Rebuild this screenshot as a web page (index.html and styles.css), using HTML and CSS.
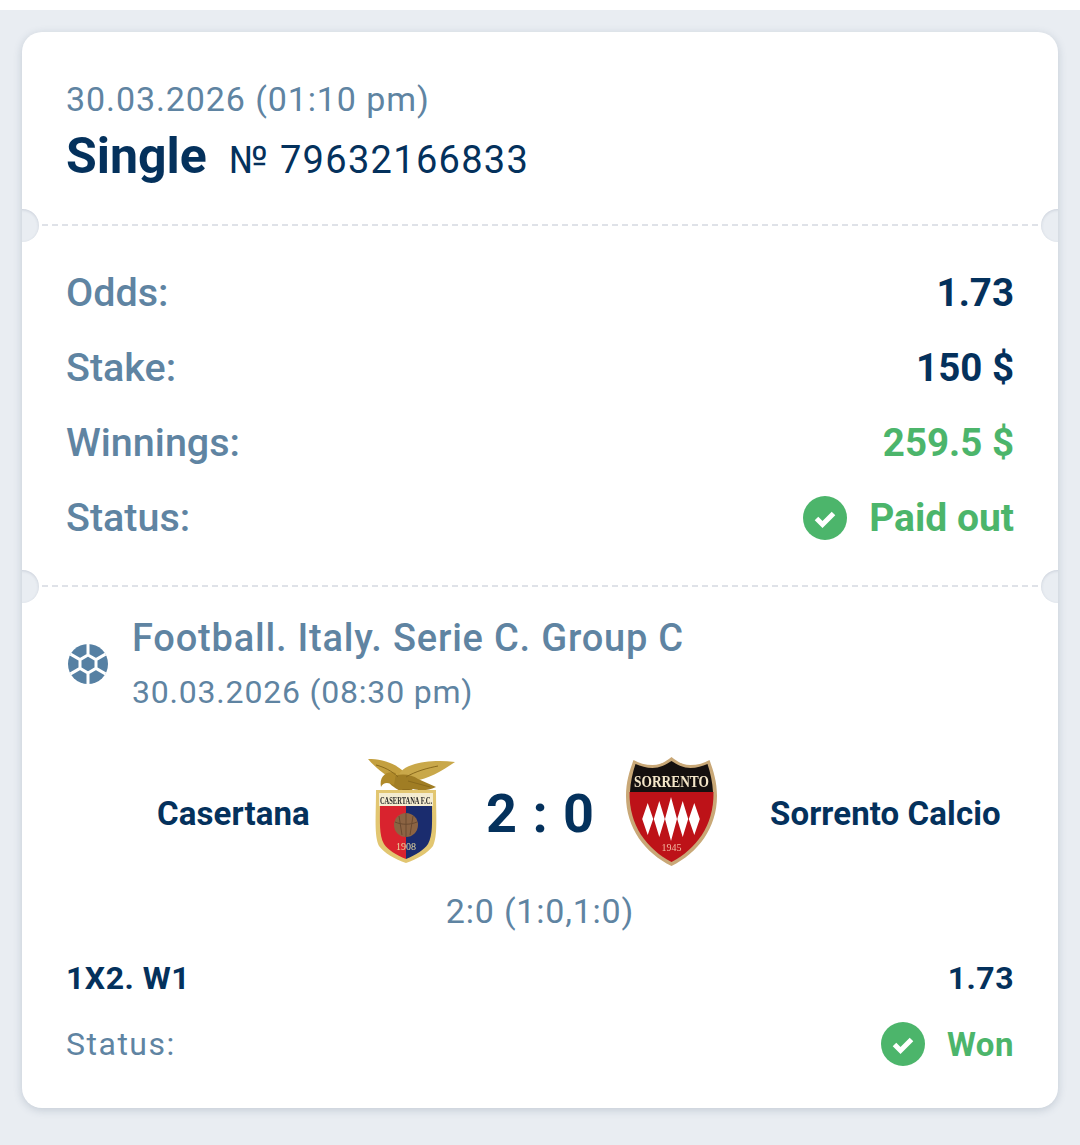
FILE: index.html
```html
<!DOCTYPE html>
<html lang="en">
<head>
<meta charset="utf-8">
<title>Single 79632166833</title>
<link rel="stylesheet" href="styles.css">
</head>
<body>
<div class="topstrip"></div>
<main class="page">
  <article class="ticket">
    <section class="head">
      <div class="date">30.03.2026 (01:10 pm)</div>
      <div class="title"><strong>Single</strong><span>№ 79632166833</span></div>
    </section>
    <section class="stats perforated">
      <div class="row"><span class="label">Odds:</span><span class="value">1.73</span></div>
      <div class="row"><span class="label">Stake:</span><span class="value">150 $</span></div>
      <div class="row"><span class="label">Winnings:</span><span class="value green">259.5 $</span></div>
      <div class="row"><span class="label">Status:</span><span class="value paid green status">
        <svg class="check" viewBox="0 0 44 44"><circle cx="22" cy="22" r="22" fill="#4cb56b"/><path d="M13.5 22.5l6 6 11-11" fill="none" stroke="#fff" stroke-width="5"/></svg>Paid out</span></div>
    </section>
    <section class="event perforated">
      <div class="league">
        <svg class="ball" viewBox="0 0 40 40">
          <circle cx="20" cy="20" r="20" fill="#5680a3"/>
          <path d="M20 11l8 4.600v8.800l-8 4.600-8-4.600v-8.800z M20 0v11 M28 15.600l9.500-5.500 M28 24.400l9.500 5.500 M20 29v11 M12 24.400l-9.500 5.500 M12 15.600l-9.500-5.500" fill="none" stroke="#fff" stroke-width="3"/>
        </svg>
        <div class="league-text">
          <div class="league-name">Football. Italy. Serie C. Group C</div>
          <div class="league-date">30.03.2026 (08:30 pm)</div>
        </div>
      </div>
      <div class="match">
        <div class="team home">Casertana</div>
        <svg class="crest crest-home" viewBox="0 0 87 105">
          <path d="M0 0C12 0 26 3 36 13L34 24C22 20 8 10 0 0z" fill="#c4a03f"/>
          <path d="M87 3C72 1 55 2 44 6 34 9 30 15 28 22L46 22C60 20 74 12 87 3z" fill="#c9a84a"/>
          <path d="M20 20C28 14 42 14 50 20L68 28C58 33 50 31 45 30 40 34 36 34 32 32 26 28 20 25 20 20z" fill="#a07d24"/>
          <path d="M28 14C18 11 11 18 13 28 15 23 20 23 26 26z" fill="#b08a2a"/>
          <path d="M8 6C16 8 24 12 30 18M70 7C60 9 48 12 38 18M40 22L62 28" stroke="#8a6a1c" stroke-width="1" fill="none"/>
          <path d="M34 30l2 3h4l2-3z" fill="#8f6d1c"/>
          <path d="M8 31h60c0 26 2 46-3 56-5 7-16 13-27 17-11-4-22-10-27-17-5-10-3-30-3-56z" fill="#e2c671"/>
          <path d="M11 34h54v13H11z" fill="#f4ecd0"/>
          <path d="M12 47h26v53c-10-4-18-9-22-15-5-9-4-22-4-38z" fill="#d9232e"/>
          <path d="M38 47h26c0 16 1 29-4 38-4 6-12 11-22 15z" fill="#1a2c6e"/>
          <text class="crest-text crest-text-home" text-anchor="middle" transform="translate(38 45) scale(1 1.7)">CASERTANA F.C.</text>
          <circle cx="38" cy="66" r="12" fill="#8c6443"/>
          <path d="M27 63c7 3 15 3 22 0M38 54v24M31 57l3 19M45 57l-3 19" stroke="#6a4a30" stroke-width="1" fill="none"/>
          <text x="38" y="91" class="crest-year crest-year-home" text-anchor="middle">1908</text>
        </svg>
        <div class="score">2 : 0</div>
        <svg class="crest crest-away" viewBox="0 0 91 109">
          <path d="M45.500 0c6 5 12 8 19 8 7 0 14-2 19-5 4 11 7.500 22 7.500 36 0 32-19 57-45.500 70C19 96 0 71 0 39 0 25 3.500 14 7.500 3c5 3 12 5 19 5 7 0 13-3 19-8z" fill="#c9a877"/>
          <path d="M45.500 4c6 4 12 7 19 7 6 0 12-2 17-4 3 9 5 18 5.500 28H4c.5-10 2.500-19 5.500-28 5 2 11 4 17 4 7 0 13-3 19-7z" fill="#15100f"/>
          <path d="M3.500 35h84C88 69 70 92 45.500 105 21 92 3 69 3.500 35z" fill="#bd1218"/>
          <text class="crest-text crest-text-away" text-anchor="middle" transform="translate(45.500 30) scale(1 1.25)">SORRENTO</text>
          <path d="M21.700 46l5.500 16-5.500 16-5.500-16zM33.300 44l5.500 18-5.500 18-5.500-18zM45 40l6 22-6 22-6-22zM56.700 44l5.500 18-5.500 18-5.500-18zM68.300 46l5.500 16-5.500 16-5.500-16z" fill="#fff"/>
          <text x="45.500" y="94" class="crest-year crest-year-away" text-anchor="middle">1945</text>
        </svg>
        <div class="team away">Sorrento Calcio</div>
      </div>
      <div class="periods">2:0 (1:0,1:0)</div>
      <div class="row small"><span class="pick">1X2. W1</span><span class="pick">1.73</span></div>
      <div class="row small second"><span class="small-label">Status:</span><span class="pick won green status">
        <svg class="check" viewBox="0 0 44 44"><circle cx="22" cy="22" r="22" fill="#4cb56b"/><path d="M13.5 22.5l6 6 11-11" fill="none" stroke="#fff" stroke-width="5"/></svg>Won</span></div>
    </section>
  </article>
</main>
</body>
</html>
```
FILE: styles.css
```css
* { box-sizing: border-box; }
html, body { margin: 0; padding: 0; }
body {
  width: 1080px;
  height: 1145px;
  overflow: hidden;
  background: #e9edf2;
  font-family: Roboto, "Liberation Sans", sans-serif;
  color: #04315c;
}
.topstrip { height: 10px; background: #fff; }
.page { padding: 22px 22px 0; }
.ticket {
  height: 1076px;
  background: #fff;
  border-radius: 20px;
  overflow: hidden;
  box-shadow: 0 2px 8px rgba(60, 80, 110, .22);
}
.head { height: 192px; padding: 47px 44px 0; }
.date { font-size: 34px; line-height: 40px; color: #5f84a2; letter-spacing: .9px; }
.title { display: flex; align-items: baseline; gap: 22px; margin-top: 9px; line-height: 56px; }
.title strong { font-size: 50px; font-weight: 700; }
.title span { font-size: 38px; letter-spacing: 1.300px; }
.perforated { position: relative; border-top: 2px dashed #dfe2e8; }
.perforated::before, .perforated::after {
  content: "";
  position: absolute;
  top: -17px;
  width: 34px;
  height: 33px;
  background: #e9edf2;
  box-shadow: inset 0 1px 3px rgba(60, 80, 110, .18);
}
.perforated::before { left: -17px; border-radius: 0 16.500px 16.500px 0; }
.perforated::after { right: -17px; border-radius: 16.500px 0 0 16.500px; }
.stats { height: 361px; padding: 29px 44px 0; }
.row { display: flex; justify-content: space-between; align-items: center; }
.stats .row { height: 75px; }
.label { color: #5f84a2; font-weight: 500; font-size: 39.500px; }
.value { font-weight: 700; font-size: 38.500px; }
.value.paid { font-size: 39px; }
.green { color: #4cb56b; }
.status { display: inline-flex; align-items: center; gap: 22px; }
.check { width: 44px; height: 44px; display: block; }
.event { height: 523px; padding: 27px 44px 0; }
.league { display: flex; align-items: center; gap: 24px; padding-left: 2px; }
.ball { width: 40px; height: 40px; flex: none; margin-top: 2px; }
.league-name { font-size: 38px; line-height: 48px; font-weight: 500; color: #5f84a2; letter-spacing: .8px; white-space: nowrap; }
.league-date { font-size: 32px; line-height: 40px; margin-top: 10px; color: #5f84a2; letter-spacing: .8px; }
.match {
  display: grid;
  grid-template-columns: 302px 87px 171px 91px 1fr;
  align-items: center;
  height: 128px;
  margin-top: 37px;
}
.team { font-size: 33px; font-weight: 700; letter-spacing: .1px; white-space: nowrap; }
.home { padding-left: 91px; }
.away { padding-left: 53px; }
.crest { display: block; margin-bottom: 3px; filter: blur(.5px); }
.crest-home { width: 87px; height: 105px; }
.crest-away { width: 91px; height: 109px; }
.score { font-size: 54px; font-weight: 700; text-align: center; letter-spacing: 1px; white-space: nowrap; }
.crest-text { font-family: "Liberation Serif", serif; font-weight: 700; }
.crest-text-home { font-size: 6.500px; fill: #2a2a2a; }
.crest-text-away { font-size: 13.400px; fill: #f4e6c8; }
.crest-year { font-family: "Liberation Serif", serif; font-size: 10px; }
.crest-year-home { fill: #e8d9a0; }
.crest-year-away { fill: #f2b8a0; }
.periods { margin: 14px 0 25px; text-align: center; font-size: 34px; line-height: 40px; color: #5f84a2; letter-spacing: .8px; }
.row.small { height: 44px; margin-top: 22px; }
.pick { font-size: 32px; font-weight: 700; letter-spacing: .5px; }
.pick.won { font-size: 33px; }
.small-label { font-size: 32px; color: #5f84a2; letter-spacing: 1.500px; }
```
